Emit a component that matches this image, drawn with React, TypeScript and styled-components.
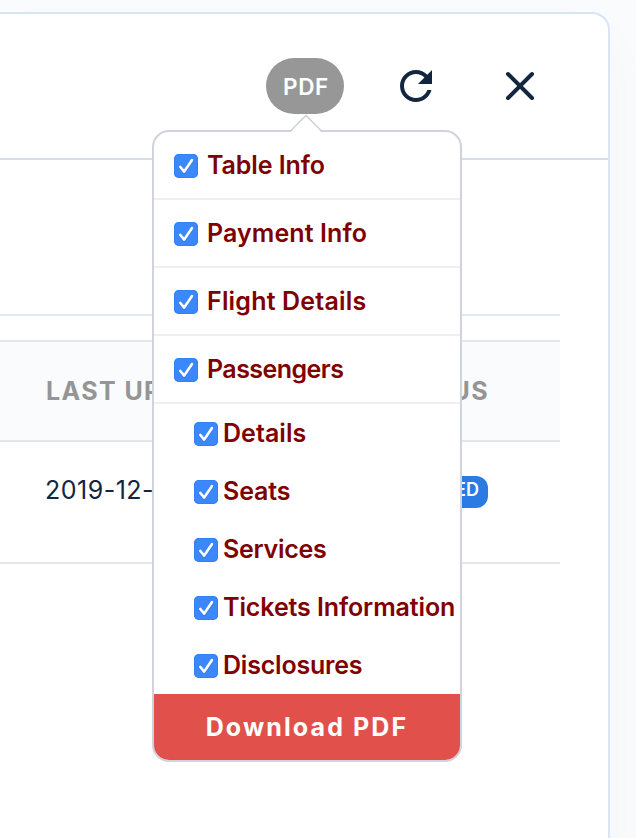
import React from 'react';
import styled, { createGlobalStyle } from 'styled-components';

const GlobalStyle = createGlobalStyle`
  *, *::before, *::after { box-sizing: border-box; }
  html, body { margin: 0; height: 100%; overflow: hidden; }
  body { background: #f9fbfd; color: #12263f; font-family: Inter, "Liberation Sans", sans-serif; }
  button { font-family: inherit; border: 0; padding: 0; background: none; color: inherit; }
`;

const Page = styled.main`
  height: 838px;
  padding: 12px 26px 0 0;
  overflow: hidden;
`;

const Card = styled.section`
  height: 900px;
  background: #fff;
  border: 2px solid #d9e5f2;
  border-left: 0;
  border-top-right-radius: 18px;
  box-shadow: 0 24px 48px rgba(18, 38, 63, 0.03);
`;

const Header = styled.header`
  display: flex;
  align-items: center;
  justify-content: flex-end;
  height: 146px;
  padding-right: 64px;
  border-bottom: 2px solid #d7dcea;
`;

const MenuAnchor = styled.div`
  position: relative;
  width: 78px;
  height: 56px;
  margin-right: 48px;
`;

const PdfButton = styled.button`
  width: 78px;
  height: 56px;
  padding-left: 2px;
  border-radius: 28px;
  background: #979797;
  color: #fff;
  font-size: 22.5px;
  font-weight: 600;
  letter-spacing: 0.6px;
`;

const IconButton = styled.button<{ $gap?: number }>`
  display: flex;
  width: 48px;
  height: 48px;
  margin-right: ${({ $gap = 0 }) => $gap}px;
`;

const Menu = styled.div`
  position: absolute;
  z-index: 2;
  top: 72px;
  left: -114px;
  width: 310px;
  height: 632px;
  border: 2px solid #ced4da;
  border-radius: 17px;
  background: #fff;
`;

const Caret = styled.svg`
  position: absolute;
  top: -18px;
  left: 135px;
`;

const Option = styled.label<{ $nested?: boolean }>`
  display: flex;
  align-items: center;
  gap: ${({ $nested }) => ($nested ? 5 : 9)}px;
  height: ${({ $nested }) => ($nested ? 58 : 68)}px;
  padding-left: ${({ $nested }) => ($nested ? 40 : 20)}px;
  border-bottom: ${({ $nested }) => ($nested ? '0' : '2px solid #efefef')};
`;

const OptionText = styled.span<{ $tracking: number }>`
  padding-bottom: 1px;
  color: #800000;
  font-size: 25px;
  line-height: 32px;
  font-weight: 600;
  white-space: nowrap;
  letter-spacing: ${({ $tracking }) => $tracking}px;
`;

const CheckBox = styled.span`
  display: flex;
  flex: none;
  width: 24px;
  height: 24px;
  margin-top: 2px;
  border-radius: 5px;
  background: #3b88fd;
  box-shadow: inset 0 0 0 1px #3381f5;
`;

const DownloadButton = styled.button`
  display: block;
  width: 306px;
  height: 66px;
  border-radius: 0 0 15px 15px;
  background: #e2504c;
  color: #fff;
  font-size: 25px;
  font-weight: 700;
  letter-spacing: 2.1px;
`;

const Content = styled.div`
  padding: 154px 48px 0 0;
`;

const Divider = styled.div`
  height: 2px;
  margin-bottom: 24px;
  background: #dfe8f4;
`;

const Row = styled.div<{ $head?: boolean }>`
  display: grid;
  grid-template-columns: 360px 152px;
  justify-content: end;
  align-items: ${({ $head }) => ($head ? 'center' : 'start')};
  height: ${({ $head }) => ($head ? 102 : 122)}px;
  padding-top: ${({ $head }) => ($head ? 0 : 32)}px;
  border-bottom: 2px solid #e6e6e6;
  border-top: ${({ $head }) => ($head ? '2px solid #e6e6e6' : '0')};
  background: ${({ $head }) => ($head ? '#f9fbfd' : '#fff')};
`;

const HeadCell = styled.span`
  color: #959595;
  font-size: 25px;
  font-weight: 700;
  letter-spacing: 1.4px;

  &:first-child { margin-left: -2px; }
  &:last-child { justify-self: end; margin-right: 71px; }
`;

const DateCell = styled.span`
  margin-left: -3px;
  font-size: 25px;
  line-height: 32px;
  letter-spacing: 0.5px;
`;

const Badge = styled.span`
  justify-self: end;
  height: 32px;
  margin: 2px 72px 0 0;
  padding: 0 9px 0 12px;
  border-radius: 12px;
  background: #2c7be5;
  color: #fff;
  font-size: 18px;
  font-weight: 600;
  line-height: 27px;
`;

const CheckMark = () => (
  <CheckBox>
    <svg width="24" height="24" viewBox="0 0 24 24" fill="none" strokeLinecap="round" strokeLinejoin="round">
      <path d="M6.3 14.4L10.2 18.9L18 7.2" stroke="#2866c4" strokeOpacity=".35" strokeWidth="2.8" />
      <path d="M6.3 13L10.2 17.6L17.9 6.2" stroke="#fff" strokeWidth="2.6" />
    </svg>
  </CheckBox>
);

const options = [
  { text: 'Table Info', tracking: -0.1 },
  { text: 'Payment Info', tracking: 0.1 },
  { text: 'Flight Details', tracking: 0.18 },
  { text: 'Passengers', tracking: -0.55 },
  { text: 'Details', tracking: 0.05, nested: true },
  { text: 'Seats', tracking: -0.1, nested: true },
  { text: 'Services', tracking: -0.28, nested: true },
  { text: 'Tickets Information', tracking: -0.1, nested: true },
  { text: 'Disclosures', tracking: -0.2, nested: true },
];

export default function App() {
  return (
    <>
      <GlobalStyle />
      <Page>
        <Card>
          <Header>
            <MenuAnchor>
              <PdfButton>PDF</PdfButton>
              <Menu>
                <Caret width="36" height="20" viewBox="0 0 36 20">
                  <path d="M1 19L17 2L33 19V20H1Z" fill="#fff" />
                  <path d="M1 17.5L17 1.5L33 17.5" fill="none" stroke="#ced4da" strokeWidth="1.7" />
                </Caret>
                {options.map(({ text, tracking, nested }) => (
                  <Option key={text} $nested={nested}>
                    <CheckMark />
                    <OptionText $tracking={tracking}>{text}</OptionText>
                  </Option>
                ))}
                <DownloadButton>Download PDF</DownloadButton>
              </Menu>
            </MenuAnchor>
            <IconButton aria-label="Refresh" $gap={56}>
              <svg width="48" height="48" viewBox="0 0 24 24" fill="#12263f">
                <path d="M17.65 6.35C16.2 4.9 14.21 4 12 4c-4.42 0-7.99 3.58-7.99 8s3.57 8 7.99 8c3.73 0 6.84-2.55 7.73-6h-2.08c-.82 2.33-3.04 4-5.65 4-3.31 0-6-2.69-6-6s2.69-6 6-6c1.66 0 3.14.69 4.22 1.78L13 11h7V4l-2.35 2.35z" />
              </svg>
            </IconButton>
            <IconButton aria-label="Close">
              <svg width="48" height="48" viewBox="0 0 48 48" fill="none" stroke="#12263f" strokeWidth="4" strokeLinecap="round">
                <path d="M12 12L36 36M36 12L12 36" />
              </svg>
            </IconButton>
          </Header>
          <Content>
            <Divider />
            <Row $head>
              <HeadCell>LAST UPDATE</HeadCell>
              <HeadCell>STATUS</HeadCell>
            </Row>
            <Row>
              <DateCell>2019-12-18</DateCell>
              <Badge>ISSUED</Badge>
            </Row>
          </Content>
        </Card>
      </Page>
    </>
  );
}
